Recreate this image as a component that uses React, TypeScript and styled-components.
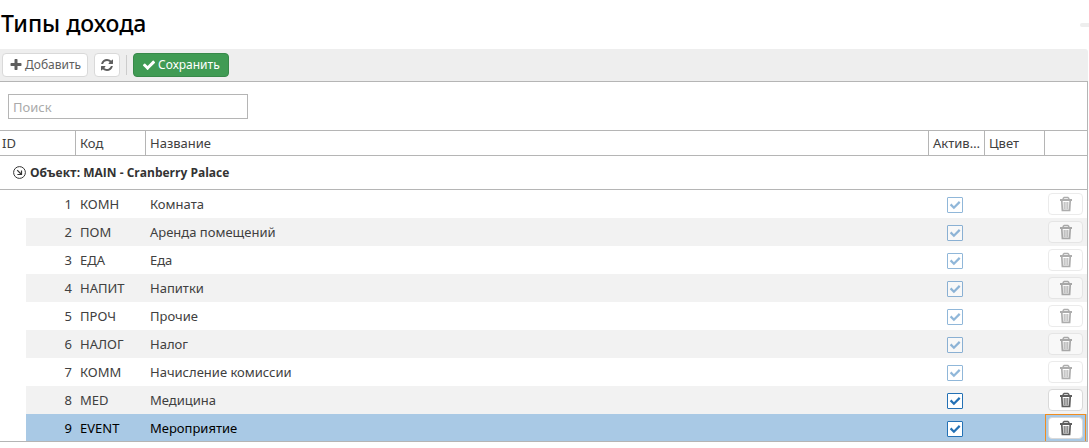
import React, { useState } from "react";
import styled, { createGlobalStyle, css } from "styled-components";

const Global = createGlobalStyle`
  *, *::before, *::after { box-sizing: border-box; }
  body {
    margin: 0;
    background: #fff;
    color: #404040;
    font-family: "Noto Sans", "Open Sans", sans-serif;
    font-size: 13px;
    line-height: 18px;
  }
  button, input { font: inherit; }
`;

const Page = styled.main`
  padding-right: 1px;
`;

const TitleBar = styled.header`
  display: flex;
  align-items: center;
  justify-content: space-between;
  height: 49px;
  margin-right: -1px;
`;

const Title = styled.h1`
  margin: 0;
  padding-left: 1px;
  color: #000;
  font-size: 23px;
  line-height: 32px;
  padding-bottom: 3px;
  font-weight: 500;
`;

const Handle = styled.span`
  width: 9px;
  height: 4px;
  border-radius: 2px 0 0 2px;
  background: #eee;
`;

const Toolbar = styled.div`
  display: flex;
  align-items: center;
  gap: 6px;
  height: 32px;
  padding-left: 2px;
  border-radius: 0 3px 0 0;
  background: #eee;
`;

const ToolButton = styled.button<{ $kind?: "primary" | "icon" }>`
  display: flex;
  align-items: center;
  gap: 2px;
  height: 24px;
  padding: 0 ${(p) => (p.$kind === "primary" ? 8 : p.$kind === "icon" ? 5 : 6)}px;
  border: 1px solid ${(p) => (p.$kind === "primary" ? "#38894a" : "#d9d9d9")};
  border-radius: 4px;
  background: ${(p) => (p.$kind === "primary" ? "#409b54" : "#fff")};
  color: ${(p) => (p.$kind === "primary" ? "#fff" : "#5e5e5e")};
  font-size: 12px;
  white-space: nowrap;
`;

const Separator = styled.span`
  width: 1px;
  height: 20px;
  background: #ccc;
`;

const Panel = styled.section`
  border: solid #b5b5b5;
  border-width: 1px 1px 0 0;
`;

const SearchBar = styled.div`
  padding: 12px 8px 11px;
`;

const SearchInput = styled.input`
  display: block;
  width: 240px;
  height: 25px;
  padding: 0 4px;
  border: 1px solid #b5b5b5;
  border-radius: 0;
  color: #404040;
  &::placeholder { color: #aaa; opacity: 1; }
`;

const Grid = styled.table`
  width: 100%;
  table-layout: fixed;
  border-spacing: 0;
`;

const Col = styled.col<{ $width?: number }>`
  ${(p) => p.$width && css`width: ${p.$width}px;`}
`;

const HeadCell = styled.th`
  height: 26px;
  padding: 0 2px 0 4px;
  border: solid #b5b5b5;
  border-width: 1px 1px 1px 0;
  overflow: hidden;
  text-align: left;
  text-overflow: ellipsis;
  white-space: nowrap;
  font-weight: 400;
  &:first-child { padding-left: 2px; }
  &:last-child { border-right: 0; }
`;

const GroupCell = styled.th`
  height: 34px;
  padding: 0 0 0 13px;
  border-bottom: 1px solid #b5b5b5;
  text-align: left;
`;

const GroupToggle = styled.button`
  display: flex;
  align-items: center;
  gap: 4px;
  padding: 0;
  border: 0;
  background: none;
  color: #333;
  font-family: "Open Sans", sans-serif;
  font-size: 12px;
  font-weight: 700;
`;

const Cell = styled.td<{ $align?: "right" }>`
  height: 28px;
  padding: 0 4px;
  text-align: ${(p) => p.$align ?? "left"};
  white-space: nowrap;
`;

const CheckCell = styled(Cell)`
  padding: 0 4px 0 0;
  text-align: center;
`;

const ActionCell = styled(Cell)`
  padding: 0 1px 0 0;
`;

const FocusFrame = styled.div`
  display: flex;
  align-items: center;
  height: 28px;
  padding: 0 2px;
  border: 1px solid transparent;
`;

const Row = styled.tr<{ $selected: boolean }>`
  &:nth-child(even) ${Cell} { background: #f2f2f2; }
  ${(p) => p.$selected && css`
    color: #000;
    && ${Cell} { background: #a9c9e5; }
    ${FocusFrame} { border-color: #f08c1e; }
  `}
`;

const Check = styled.label`
  display: inline-flex;
  position: relative;
  vertical-align: middle;
  svg { position: absolute; inset: 0; pointer-events: none; }
`;

const CheckInput = styled.input`
  appearance: none;
  width: 16px;
  height: 16px;
  margin: 0;
  border: 1px solid #2471b5;
  border-radius: 1px;
  background: #fff;
  & + svg { color: #2471b5; visibility: hidden; }
  &:checked + svg { visibility: visible; }
  &:disabled, &:disabled + svg { opacity: 0.5; }
`;

const DeleteButton = styled.button`
  display: flex;
  align-items: center;
  justify-content: center;
  width: 100%;
  height: 22px;
  padding: 0;
  border: 1px solid #d9d9d9;
  border-radius: 4px;
  background: #fff;
  color: #5e5e5e;
  &:disabled { opacity: 0.5; }
`;

const GridEnd = styled.div`
  height: 1px;
  margin-top: -1px;
  background: #b5b5b5;
`;

const Glyph = ({ d }: { d: string }) => (
  <svg width="14" height="14" viewBox="0 0 1792 1792" fill="currentColor" aria-hidden="true">
    <path d={d} />
  </svg>
);

const PLUS =
  "M1600 736v192q0 40-28 68t-68 28h-416v416q0 40-28 68t-68 28h-192q-40 0-68-28t-28-68v-416h-416q-40 0-68-28t-28-68v-192q0-40 28-68t68-28h416v-416q0-40 28-68t68-28h192q40 0 68 28t28 68v416h416q40 0 68 28t28 68z";
const REFRESH =
  "M1639 1056q0 5-1 7-64 268-268 434.5t-478 166.5q-146 0-282.5-55t-243.5-157l-129 129q-19 19-45 19t-45-19-19-45v-448q0-26 19-45t45-19h448q26 0 45 19t19 45-19 45l-137 137q71 66 161 102t187 36q134 0 250-65t186-179q11-17 53-117 8-23 30-23h192q13 0 22.5 9.5t9.5 22.5zm25-800v448q0 26-19 45t-45 19h-448q-26 0-45-19t-19-45 19-45l138-138q-148-137-349-137-134 0-250 65t-186 179q-11 17-53 117-8 23-30 23h-199q-13 0-22.5-9.5t-9.5-22.5v-7q65-268 270-434.5t480-166.5q146 0 284 55.5t245 156.5l130-129q19-19 45-19t45 19 19 45z";
const CHECK =
  "M1671 566q0 40-28 68l-724 724-136 136q-28 28-68 28t-68-28l-136-136-362-362q-28-28-28-68t28-68l136-136q28-28 68-28t68 28l294 295 656-657q28-28 68-28t68 28l136 136q28 28 28 68z";

const TrashIcon = () => (
  <svg width="14" height="16" viewBox="0 0 14 16" fill="none" stroke="currentColor" aria-hidden="true">
    <path d="M4.2 3.5V2.4L5.2 1.5H8.8L9.8 2.4V3.5" strokeWidth="1.4" />
    <path d="M1 4H13" strokeWidth="2" />
    <path d="M2.8 5L3.4 14.3H10.6L11.2 5" strokeWidth="1.7" />
    <path d="M5.2 6V13M7 6V13M8.8 6V13" strokeWidth="1" />
  </svg>
);

const CollapseIcon = () => (
  <svg width="13" height="13" viewBox="0 0 13 13" fill="none" stroke="currentColor" aria-hidden="true">
    <circle cx="6.5" cy="6.5" r="5.9" strokeWidth="1" />
    <path d="M4.2 4.2L8 8M8.5 4.4V8.5H4.4" strokeWidth="1.2" />
  </svg>
);

const TickIcon = () => (
  <svg width="16" height="16" viewBox="0 0 16 16" fill="none" stroke="currentColor" aria-hidden="true">
    <path d="M3.6 7.4L6.9 10.7L12.7 4.9" strokeWidth="2.2" />
  </svg>
);

type Income = { id: number; code: string; name: string; system: boolean };

const INCOMES: Income[] = [
  { id: 1, code: "КОМН", name: "Комната", system: true },
  { id: 2, code: "ПОМ", name: "Аренда помещений", system: true },
  { id: 3, code: "ЕДА", name: "Еда", system: true },
  { id: 4, code: "НАПИТ", name: "Напитки", system: true },
  { id: 5, code: "ПРОЧ", name: "Прочие", system: true },
  { id: 6, code: "НАЛОГ", name: "Налог", system: true },
  { id: 7, code: "КОММ", name: "Начисление комиссии", system: true },
  { id: 8, code: "MED", name: "Медицина", system: false },
  { id: 9, code: "EVENT", name: "Мероприятие", system: false },
];

export default function App() {
  const [selected, setSelected] = useState(9);
  const [open, setOpen] = useState(true);

  return (
    <>
      <Global />
      <Page>
        <TitleBar>
          <Title>Типы дохода</Title>
          <Handle />
        </TitleBar>
        <Toolbar>
          <ToolButton type="button"><Glyph d={PLUS} />Добавить</ToolButton>
          <ToolButton type="button" $kind="icon" aria-label="Обновить"><Glyph d={REFRESH} /></ToolButton>
          <Separator />
          <ToolButton type="button" $kind="primary"><Glyph d={CHECK} />Сохранить</ToolButton>
        </Toolbar>
        <Panel>
          <SearchBar>
            <SearchInput type="text" placeholder="Поиск" aria-label="Поиск" />
          </SearchBar>
          <Grid>
            <colgroup>
              <Col $width={26} />
              <Col $width={50} />
              <Col $width={70} />
              <Col />
              <Col $width={56} />
              <Col $width={60} />
              <Col $width={42} />
            </colgroup>
            <thead>
              <tr>
                <HeadCell colSpan={2}>ID</HeadCell>
                <HeadCell>Код</HeadCell>
                <HeadCell>Название</HeadCell>
                <HeadCell title="Активный">Актив…</HeadCell>
                <HeadCell>Цвет</HeadCell>
                <HeadCell />
              </tr>
              <tr>
                <GroupCell colSpan={7}>
                  <GroupToggle type="button" aria-expanded={open} onClick={() => setOpen(!open)}>
                    <CollapseIcon />
                    Объект: MAIN - Cranberry Palace
                  </GroupToggle>
                </GroupCell>
              </tr>
            </thead>
            {open && (
              <tbody>
                {INCOMES.map((item) => (
                  <Row key={item.id} $selected={item.id === selected} onClick={() => setSelected(item.id)}>
                    <td />
                    <Cell $align="right">{item.id}</Cell>
                    <Cell>{item.code}</Cell>
                    <Cell>{item.name}</Cell>
                    <CheckCell>
                      <Check>
                        <CheckInput type="checkbox" defaultChecked disabled={item.system} aria-label={item.name} />
                        <TickIcon />
                      </Check>
                    </CheckCell>
                    <Cell />
                    <ActionCell>
                      <FocusFrame>
                        <DeleteButton type="button" disabled={item.system} aria-label="Удалить">
                          <TrashIcon />
                        </DeleteButton>
                      </FocusFrame>
                    </ActionCell>
                  </Row>
                ))}
              </tbody>
            )}
          </Grid>
          <GridEnd />
        </Panel>
      </Page>
    </>
  );
}
